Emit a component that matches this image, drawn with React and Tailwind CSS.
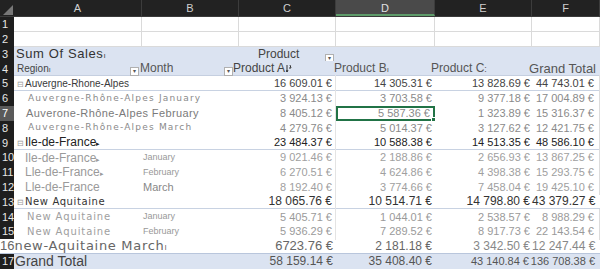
import React from "react";

const widths = ["w-[14px]", "w-[128px]", "w-[97px]", "w-[97px]", "w-[99px]", "w-[97px]", "w-[68px]"];

// pivot body rows: [label, month, C, D, E, F, kind]
const rows = [
  { n: 5, a: "Auvergne-Rhone-Alpes", c: "16 609.01 €", d: "14 305.31 €", e: "13 828.69 €", f: "44 743.01 €", kind: "group", line: true },
  { n: 6, a: "Auvergne-Rhône-Alpes January", c: "3 924.13 €", d: "3 703.58 €", e: "9 377.18 €", f: "17 004.89 €", kind: "tiny" },
  { n: 7, a: "Auverone-Rhône-Alpes February", c: "8 405.12 €", d: "5 587.36 €", e: "1 323.89 €", f: "15 316.37 €", kind: "detail", selected: true },
  { n: 8, a: "Auvergne-Rhône-Alpes March", c: "4 279.76 €", d: "5 014.37 €", e: "3 127.62 €", f: "12 421.75 €", kind: "tiny" },
  { n: 9, a: "Ile-de-France", c: "23 484.37 €", d: "10 588.38 €", e: "14 513.35 €", f: "48 586.10 €", kind: "group2", line: true },
  { n: 10, a: "Ile-de-France", b: "January", c: "9 021.46 €", d: "2 188.86 €", e: "2 656.93 €", f: "13 867.25 €", kind: "light" },
  { n: 11, a: "Lle-de-France", b: "February", c: "6 270.51 €", d: "4 624.86 €", e: "4 398.38 €", f: "15 293.75 €", kind: "light" },
  { n: 12, a: "Lle-de-France", b: "March", c: "8 192.40 €", d: "3 774.66 €", e: "7 458.04 €", f: "19 425.10 €", kind: "light", bigMonth: true },
  { n: 13, a: "New Aquitaine", c: "18 065.76 €", d: "10 514.71 €", e: "14 798.80 €", f: "43 379.27 €", kind: "group3", line: true },
  { n: 14, a: "New Aquitaine", b: "January", c: "5 405.71 €", d: "1 044.01 €", e: "2 538.57 €", f: "8 988.29 €", kind: "wide" },
  { n: 15, a: "New Aquitaine", b: "February", c: "5 936.29 €", d: "7 289.52 €", e: "8 917.73 €", f: "22 143.54 €", kind: "wide" },
];

const labelStyle = {
  group: "pl-[3px] text-[10px] text-[#3a3a3a]",
  tiny: "pl-[14px] text-[9px] tracking-[1.2px] text-[#8a8a8a] font-['DejaVu_Sans',sans-serif]",
  detail: "pl-[12px] text-[11px] tracking-[0.4px] text-[#7a7a7a]",
  group2: "pl-[3px] text-[12px] text-[#222]",
  light: "pl-[11px] text-[12px] text-[#9a9a9a]",
  group3: "pl-[3px] text-[10px] tracking-[0.6px] text-[#333] font-['DejaVu_Sans',sans-serif]",
  wide: "pl-[13px] text-[10px] tracking-[0.9px] text-[#a0a0a0] font-['DejaVu_Sans',sans-serif]",
};

const valueColor = {
  group: "text-[#444] text-[11px]",
  tiny: "text-[#8a8a8a] text-[11px]",
  detail: "text-[#8a8a8a] text-[11px]",
  group2: "text-[#222] text-[11px]",
  light: "text-[#a0a0a0] text-[11px]",
  group3: "text-[#333] text-[12px]",
  wide: "text-[#9a9a9a] text-[11px]",
};

function RowNum({ n, active }) {
  return (
    <div className={`${widths[0]} shrink-0 h-full flex items-center pl-[2px] text-[11px] ${active ? "bg-[#5a5a5a] text-white" : "bg-[#1e1e1e] text-[#e6e6e6]"}`}>
      {n}
    </div>
  );
}

function Caret() {
  return (
    <span className="inline-flex items-center justify-center w-[9px] h-[9px] bg-white border border-[#b0b0b0] text-[6px] text-[#555] leading-none">
      ▾
    </span>
  );
}

export default function App() {
  const letters = ["A", "B", "C", "D", "E", "F"];
  return (
    <div className="w-[600px] h-[269px] overflow-hidden bg-white font-['Liberation_Sans',Arial,sans-serif]">
      {/* column header */}
      <div className="flex h-[17px] bg-[#222222] border-b border-[#3a3a3a]">
        <div className={`${widths[0]} shrink-0 relative`}>
          <svg className="absolute left-[3px] top-[5px]" width="10" height="10" viewBox="0 0 10 10">
            <polygon points="10,0 10,10 0,10" fill="#777" />
          </svg>
        </div>
        {letters.map((l, i) => (
          <div
            key={l}
            className={`${widths[i + 1]} shrink-0 text-center text-[11px] leading-[17px] border-r border-[#3c3c3c] ${l === "D" ? "bg-[#4a4a4a] text-[#e0e0e0] border-b-2 border-b-[#5e9b6a]" : "text-[#cfcfcf]"}`}
          >
            {l}
          </div>
        ))}
      </div>

      {/* rows 1-2 */}
      {[1, 2].map((n) => (
        <div key={n} className="flex h-[14.8px]">
          <RowNum n={n} />
          {widths.slice(1).map((w, i) => (
            <div key={i} className={`${w} shrink-0 border-r border-b border-[#dadada]`} />
          ))}
        </div>
      ))}

      {/* row 3 */}
      <div className="flex h-[14.8px]">
        <RowNum n={3} />
        <div className="flex flex-1 bg-[#dbe3f1] items-center">
          <div className="w-[128px] shrink-0 pl-[2px] text-[13px] tracking-[0.6px] text-[#333] whitespace-nowrap">
            Sum Of Sales<span className="text-[8px] text-[#444]">ı</span>
          </div>
          <div className="w-[97px] shrink-0" />
          <div className="w-[97px] shrink-0 flex items-center">
            <span className="pl-[19px] text-[12px] text-[#444]">Product</span>
            <span className="ml-auto mr-[2px] mt-[2px]"><Caret /></span>
          </div>
        </div>
      </div>

      {/* row 4 */}
      <div className="flex h-[14.8px]">
        <RowNum n={4} />
        <div className="flex flex-1 bg-[#dbe3f1] items-center border-b border-[#c5cfe0]">
          <div className="w-[128px] shrink-0 flex items-center pl-[3px]">
            <span className="text-[10px] text-[#444]">Region<span className="text-[7px]">ı</span></span>
            <span className="ml-auto mr-[3px]"><Caret /></span>
          </div>
          <div className="w-[97px] shrink-0 flex items-center">
            <span className="text-[12px] text-[#555] -ml-[2px]">Month</span>
            <span className="ml-auto mr-[6px]"><Caret /></span>
          </div>
          <div className="w-[97px] shrink-0 flex items-center whitespace-nowrap">
            <span className="text-[12px] text-[#444] -ml-[6px]">Product A</span>
            <svg className="ml-[1px]" width="6" height="9" viewBox="0 0 6 9">
              <path d="M1 1 L1 8 M1 8 L0 6 M1 8 L2 6 M4 1 L5 4 M3 4 L5 4" stroke="#333" strokeWidth="1" fill="none" />
            </svg>
          </div>
          <div className="w-[99px] shrink-0 text-[12px] text-[#555] whitespace-nowrap -ml-[2px]">
            Product B<span className="text-[8px]">ı</span>
          </div>
          <div className="w-[97px] shrink-0 text-[12px] text-[#555] whitespace-nowrap -ml-[4px] pl-[2px]">
            Product C<span className="text-[9px]">:</span>
          </div>
          <div className="flex-1 text-right pr-[4px] text-[13px] text-[#555] whitespace-nowrap">Grand Total</div>
        </div>
      </div>

      {/* body rows */}
      {rows.map((r) => {
        const isGroup = r.kind.startsWith("group");
        return (
          <div key={r.n} className="flex h-[14.8px]">
            <RowNum n={r.n} active={r.selected} />
            <div className={`flex flex-1 items-center ${r.line ? "border-b border-[#c8d2e2]" : ""}`}>
              <div className={`w-[128px] shrink-0 whitespace-nowrap overflow-visible ${labelStyle[r.kind]}`}>
                {isGroup && <span className="text-[8px] text-[#999] mr-[1px] font-['Liberation_Sans',sans-serif] tracking-normal">⊟</span>}
                {r.a}
                {(r.n === 9 || r.n === 10 || r.n === 11) && <span className="text-[7px]">▸</span>}
              </div>
              <div className={`w-[97px] shrink-0 whitespace-nowrap ${r.bigMonth ? "text-[11px] text-[#888] pl-[1px]" : "text-[9px] text-[#999] pl-[1px]"}`}>
                {r.b}
              </div>
              <div className={`w-[97px] shrink-0 text-right pr-[3px] whitespace-nowrap border-r border-[#e4e4e4] ${valueColor[r.kind]}`}>
                {r.c}
              </div>
              <div
                className={`w-[99px] shrink-0 flex items-center justify-end pr-[3px] whitespace-nowrap relative h-full ${valueColor[r.kind]} ${r.n === 9 || r.n === 12 ? "text-[10px]" : ""} ${r.selected ? "border-2 border-[#217346]" : ""}`}
              >
                {r.d}
                {r.selected && <span className="absolute -right-[3px] -bottom-[3px] w-[5px] h-[5px] bg-[#217346] border border-white" />}
              </div>
              <div className={`w-[97px] shrink-0 text-right pr-[2px] whitespace-nowrap ${valueColor[r.kind]}`}>{r.e}</div>
              <div className={`flex-1 text-right pr-[5px] whitespace-nowrap border-r border-[#dcdcdc] ${valueColor[r.kind]}`}>{r.f}</div>
            </div>
          </div>
        );
      })}

      {/* row 16: header number got swallowed into the cell */}
      <div className="flex h-[14.8px] items-center border-b border-[#b9c6dc]">
        <div className="w-[142px] shrink-0 whitespace-nowrap text-[13px] tracking-[0.7px] text-[#666] font-['DejaVu_Sans',sans-serif] overflow-visible">
          <span className="font-['Liberation_Sans',sans-serif] tracking-normal">16</span>new-Aquitaine March<span className="text-[8px]">ı</span>
        </div>
        <div className="w-[97px] shrink-0" />
        <div className="w-[97px] shrink-0 text-right pr-[3px] text-[13px] text-[#666]">6723.76 €</div>
        <div className="w-[99px] shrink-0 text-right pr-[3px] text-[12px] text-[#666]">2 181.18 €</div>
        <div className="w-[97px] shrink-0 text-right pr-[2px] text-[12px] text-[#888]">3 342.50 €</div>
        <div className="flex-1 text-right pr-[5px] text-[12px] text-[#888] whitespace-nowrap">12 247.44 €</div>
      </div>

      {/* row 17 */}
      <div className="flex h-[15px]">
        <RowNum n={17} />
        <div className="flex flex-1 min-w-0 items-center bg-[#dbe3f1]">
          <div className="w-[128px] shrink-0 pl-[1px] text-[14px] leading-[15px] text-[#444] whitespace-nowrap">Grand Total</div>
          <div className="w-[97px] shrink-0" />
          <div className="w-[97px] shrink-0 text-right pr-[3px] text-[12px] text-[#555]">58 159.14 €</div>
          <div className="w-[99px] shrink-0 text-right pr-[3px] text-[12px] text-[#555]">35 408.40 €</div>
          <div className="w-[97px] shrink-0 text-right pr-[3px] text-[11px] text-[#555] whitespace-nowrap">43 140.84 €</div>
          <div className="flex-1 min-w-0 flex justify-end pr-[5px] text-[11px] text-[#555] whitespace-nowrap">136 708.38 €</div>
        </div>
      </div>
    </div>
  );
}
